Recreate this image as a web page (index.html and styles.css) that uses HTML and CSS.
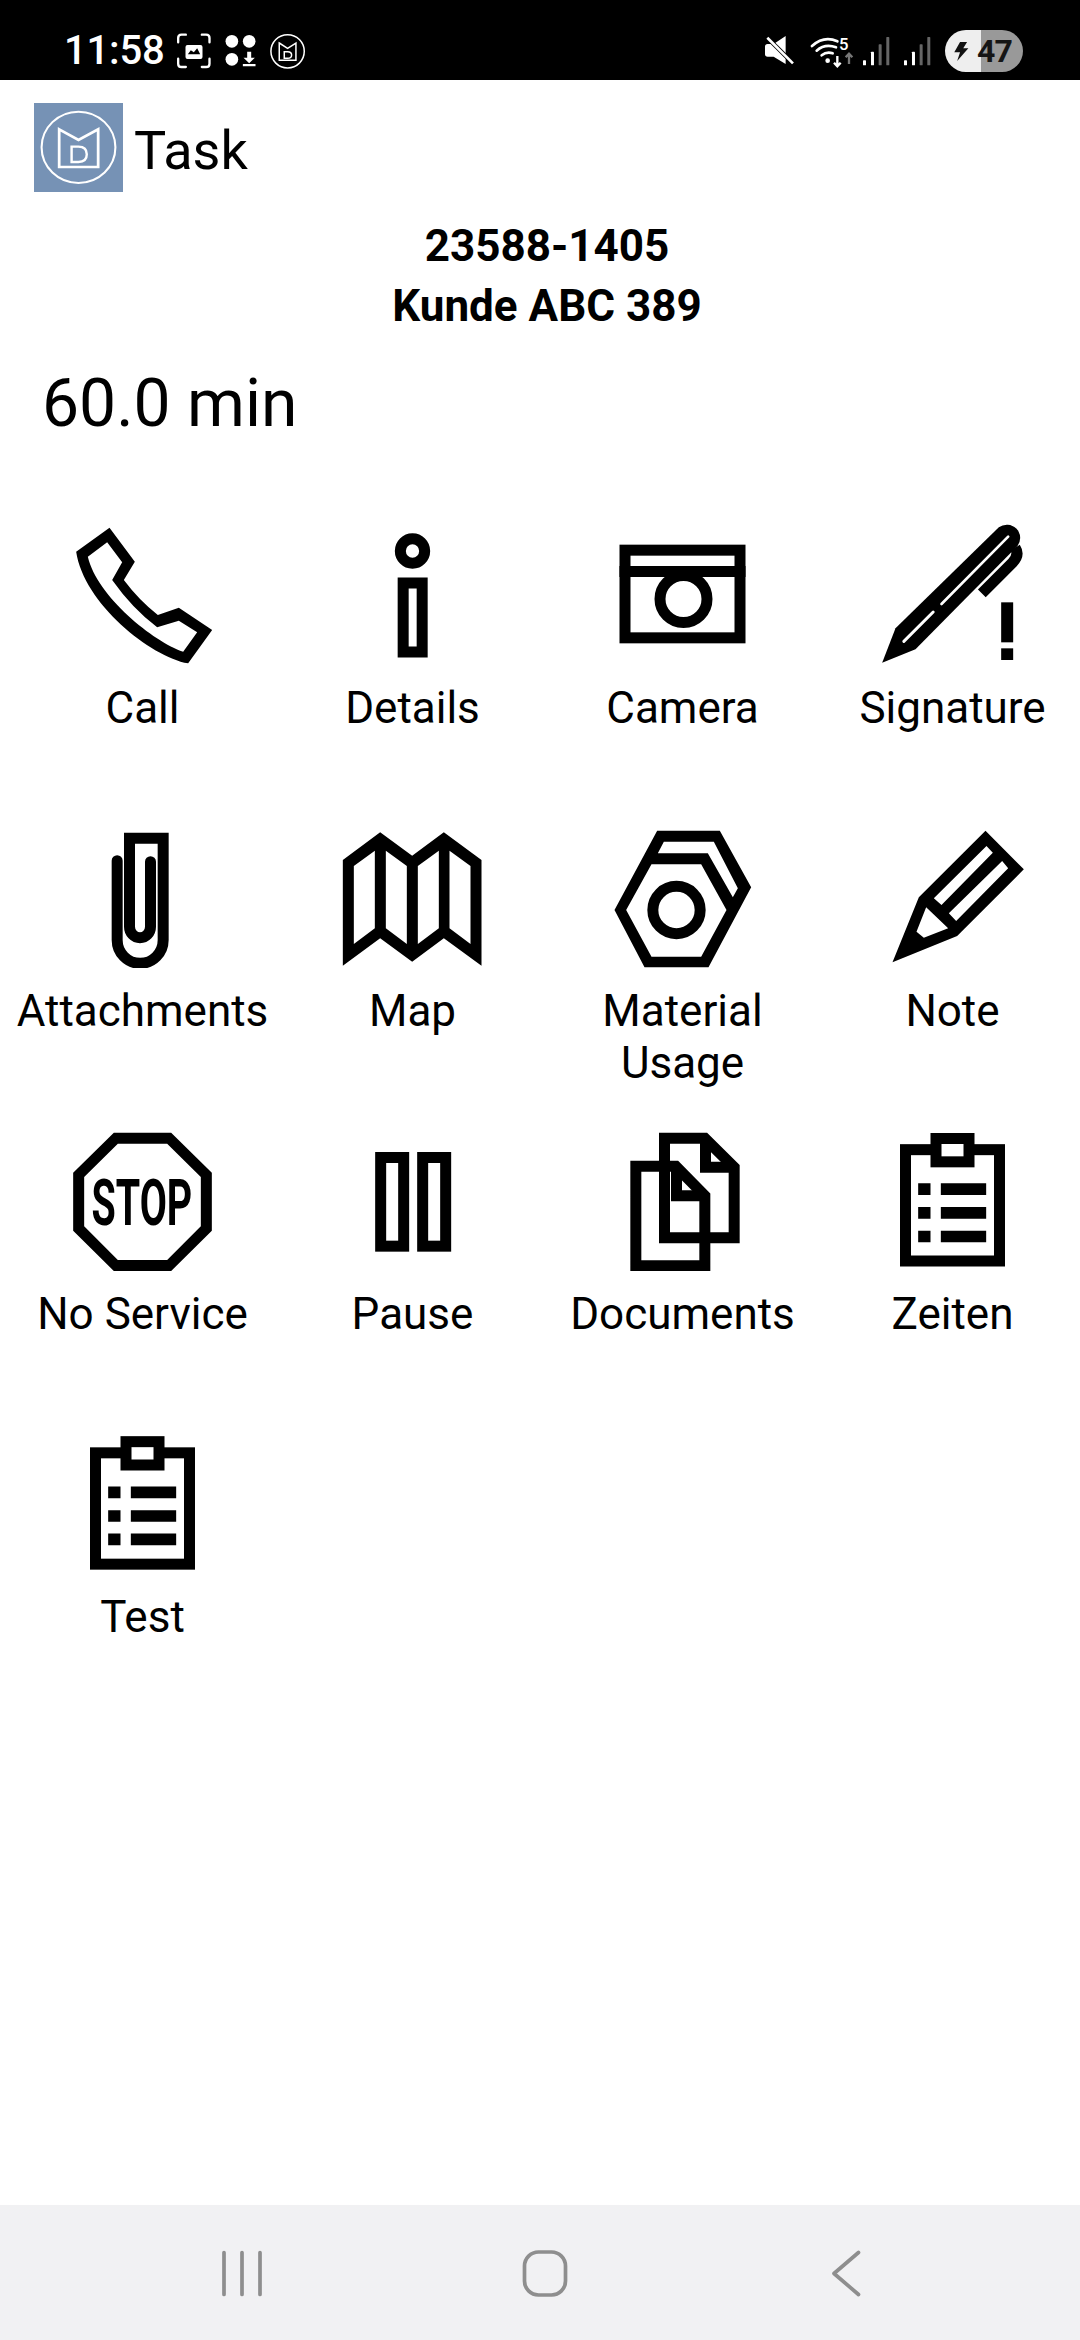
FILE: index.html
```html
<!DOCTYPE html>
<html lang="en">
<head>
<meta charset="utf-8">
<title>Task</title>
<link rel="stylesheet" href="styles.css">
</head>
<body>
<div class="page">
  <header class="status">
    <span class="time">11:58</span>
    <svg class="st-a" viewBox="510 100 105 108"><g fill="none" stroke="#fff" stroke-width="7" stroke-linecap="round" stroke-linejoin="round"><path d="M515 128V115Q515 105 525 105H538M586 105H599Q609 105 609 115V128M609 177V192Q609 202 599 202H586M538 202H525Q515 202 515 192V177"/></g><path fill="#fff" fill-rule="evenodd" d="M543 136H582Q588 136 588 142V172Q588 178 582 178H543Q537 178 537 172V142Q537 136 543 136ZM544 164L553 152L562 158L572 146L581 164Z"/></svg>
    <svg class="st-b" viewBox="650 105 100 100"><g fill="#fff"><circle cx="672" cy="127" r="19"/><circle cx="724" cy="127" r="19"/><circle cx="672" cy="181" r="19"/><path d="M718 158H730V176H741L724 193L707 176H718ZM705 195H743V202H705Z"/></g></svg>
    <svg class="st-c" viewBox="780 98 108 110"><circle cx="834" cy="153" r="50" fill="none" stroke="#fff" stroke-width="4.5"/><g fill="none" stroke="#fff" stroke-width="4.5"><path d="M809 128L834 144L859 128V180H809Z"/><path d="M824 154H834Q846 154 846 164Q846 174 834 174H824Z"/></g></svg>
    <div class="st-right">
      <svg class="ic-mute" viewBox="190 105 100 95"><path fill="#fff" d="M204 132H222L258 108V192L222 170H204Q196 170 196 162V140Q196 132 204 132Z"/><path d="M203 113L280 190" stroke="#000" stroke-width="13"/><path d="M203 113L280 190" stroke="#fff" stroke-width="8"/></svg>
      <svg class="ic-wifi" viewBox="330 100 135 105"><g fill="none" stroke="#fff" stroke-width="8" stroke-linecap="round"><path d="M336 136Q372 104 412 122"/><path d="M350 150Q375 128 408 140"/><path d="M365 164Q380 152 398 158"/></g><circle cx="383" cy="180" r="7" fill="#fff"/><path d="M412 166V196M402 186L412 197L422 186" fill="none" stroke="#fff" stroke-width="7"/><path d="M447 190V160M437 170L447 159L457 170" fill="none" stroke="#777" stroke-width="7"/><text class="wifi-num" x="417" y="149">5</text></svg>
      <svg class="ic-sig" viewBox="487 105 85 90"><rect x="490" y="178" width="9" height="15" rx="2" fill="#fff"/><rect x="514" y="152" width="9" height="41" rx="2" fill="#fff"/><rect x="537" y="130" width="9" height="63" rx="2" fill="#666"/><rect x="560" y="108" width="9" height="85" rx="2" fill="#666"/></svg>
      <svg class="ic-sig2" viewBox="487 105 85 90"><rect x="490" y="178" width="9" height="15" rx="2" fill="#fff"/><rect x="514" y="152" width="9" height="41" rx="2" fill="#fff"/><rect x="537" y="130" width="9" height="63" rx="2" fill="#666"/><rect x="560" y="108" width="9" height="85" rx="2" fill="#666"/></svg>
      <div class="battery">
        <svg class="bolt" viewBox="758 122 50 64"><path fill="#111" d="M780 124H802L790 144H806L771 184L780 156H762Z"/></svg>
        <span class="batt-num">47</span>
      </div>
    </div>
  </header>

  <div class="appbar">
    <svg class="logo" viewBox="99 309 258 267" preserveAspectRatio="none"><rect x="99" y="309" width="258" height="267" fill="#7692b5"/><circle cx="228" cy="442" r="107" fill="none" stroke="#fff" stroke-width="6"/><g fill="none" stroke="#fff" stroke-width="8"><path d="M172 388L228 420L285 388V501H172Z"/><path d="M208 440H228Q252 440 252 463Q252 486 228 486H208Z" stroke-width="7"/></g></svg>
    <h1 class="title">Task</h1>
  </div>

  <div class="head">
    <div>23588-1405</div>
    <div>Kunde ABC 389</div>
  </div>
  <div class="duration">60.0 min</div>

  <main class="grid">
    <div class="cell">
      <svg class="icon" viewBox="82.5 45 450 450"><path fill-rule="evenodd" d="M107 155L207 83L283 185L250 240Q295 300 352 345L415 323L515 390L443 490C330 470 130 310 107 155ZM142 170C170 290 340 425 428 455L470 397L415 362L350 382Q275 325 215 240L245 187L200 127Z"/></svg>
      <span class="label">Call</span>
    </div>
    <div class="cell">
      <svg class="icon" viewBox="892.5 45 450 450"><g class="ln"><circle cx="1116" cy="153" r="36.5"/><rect x="1088" y="249" width="57" height="207"/></g></svg>
      <span class="label">Details</span>
    </div>
    <div class="cell">
      <svg class="icon" viewBox="82.5 45 450 450"><g class="ln"><rect x="133.5" y="150.5" width="345" height="263"/><path d="M117 214.5H495"/><circle cx="309" cy="297" r="70.5"/></g></svg>
      <span class="label">Camera</span>
    </div>
    <div class="cell">
      <svg class="icon" viewBox="892.5 45 450 450"><path d="M905 488L945 385L1255 82A40 40 0 0 1 1311 138L1005 448Z"/><path d="M1283 110L1083 312" stroke="#fff" stroke-width="8" stroke-linecap="round"/><path d="M1058 336L970 424" stroke="#fff" stroke-width="9" stroke-linecap="round"/><path d="M1204 280L1296 188Q1318 165 1304 143" fill="none" stroke="#000" stroke-width="33"/><rect x="1262" y="307" width="36" height="120"/><rect x="1262" y="445" width="36" height="35"/></svg>
      <span class="label">Signature</span>
    </div>

    <div class="cell">
      <svg class="icon" viewBox="82.5 24 450 450"><path class="ln" stroke-linecap="round" d="M230 152V390A69 70 0 0 0 368 390V85H267V350A31.5 33 0 0 0 330 350V155"/></svg>
      <span class="label">Attachments</span>
    </div>
    <div class="cell">
      <svg class="icon" viewBox="892.5 24 450 450"><path fill-rule="evenodd" d="M907 150L1019 67L1115 137L1210 67L1323 150V467L1210 385L1115 455L1019 385L907 467ZM940 168V402L1003 355V122ZM1036 122V355L1099 402V168ZM1132 168V402L1195 355V122ZM1227 122V355L1290 402V168Z"/></svg>
      <span class="label">Map</span>
    </div>
    <div class="cell">
      <svg class="icon" viewBox="82.5 24 450 450"><path fill-rule="evenodd" d="M230 62H418L512 232L384 472H192L102 300ZM250 95L232 130H382L457 262L472 235L400 95ZM213 163L137 300L213 440H362L438 300L362 163Z"/><circle class="ln" cx="288" cy="300" r="71"/></svg>
      <span class="label">Material Usage</span>
    </div>
    <div class="cell">
      <svg class="icon" viewBox="892.5 24 450 450"><path fill-rule="evenodd" d="M1215 62L1330 178L1130 378L936 457L1015 262ZM1218 108L1060 265L1083 285L1237 128ZM1265 153L1105 310L1127 333L1283 175ZM1037 292L1008 365L1030 383L1103 355Z"/></svg>
      <span class="label">Note</span>
    </div>

    <div class="cell">
      <svg class="icon" viewBox="82.5 33 450 450"><path fill-rule="evenodd" d="M220 68H392L514 188V362L392 483H220L98 362V188ZM232 101L131 201V349L232 450H380L481 349V201L380 101Z"/><text class="stop" transform="translate(153 346) scale(0.6 1)">STOP</text></svg>
      <span class="label">No Service</span>
    </div>
    <div class="cell">
      <svg class="icon" viewBox="892.5 33 450 450"><g class="ln"><rect x="1020.5" y="142.5" width="69" height="266"/><rect x="1146.5" y="142.5" width="69" height="266"/></g></svg>
      <span class="label">Pause</span>
    </div>
    <div class="cell">
      <svg class="icon" viewBox="82.5 33 450 450"><g class="ln"><path d="M252 85H373L461 172V383H252Z"/><path d="M375 85V172H461"/><path d="M166 169H286L373 257V467H166Z"/><path d="M288 169V257H373"/></g></svg>
      <span class="label">Documents</span>
    </div>
    <div class="cell">
      <svg class="icon" viewBox="892.5 33 450 450"><g class="ln"><rect x="975" y="119" width="282" height="334"/><rect class="wf" x="1066.5" y="85.5" width="99" height="70"/></g><path d="M1013 220H1050V255H1013ZM1081 220H1217V255H1081ZM1013 291H1050V326H1013ZM1081 291H1217V326H1081ZM1013 362H1050V397H1013ZM1081 362H1217V397H1081Z"/></svg>
      <span class="label">Zeiten</span>
    </div>

    <div class="cell">
      <svg class="icon" viewBox="892.5 32.5 450 450"><g class="ln"><rect x="975" y="119" width="282" height="334"/><rect class="wf" x="1066.5" y="85.5" width="99" height="70"/></g><path d="M1013 220H1050V255H1013ZM1081 220H1217V255H1081ZM1013 291H1050V326H1013ZM1081 291H1217V326H1081ZM1013 361H1050V396H1013ZM1081 361H1217V396H1081Z"/></svg>
      <span class="label">Test</span>
    </div>
  </main>

  <nav class="nav">
    <svg class="nav-ic" viewBox="0 0 60 60"><path d="M12 9.5V51.5M30 9.5V51.5M48 9.5V51.5"/></svg>
    <svg class="nav-ic" viewBox="0 0 60 60"><rect x="9.5" y="9" width="41" height="43" rx="14"/></svg>
    <svg class="nav-ic" viewBox="0 0 60 60"><path d="M41.5 9.5L17 30.5L41.5 51.5"/></svg>
  </nav>
</div>
</body>
</html>
```
FILE: styles.css
```css
* { box-sizing: border-box; }
html, body { margin: 0; padding: 0; background: #fff; }
body { font-family: Roboto, "Liberation Sans", sans-serif; color: #000; }
svg { display: block; flex: none; }

.page { width: 1080px; height: 2340px; display: flex; flex-direction: column; overflow: hidden; }

.status { height: 80px; padding: 22px 57px 0 64px; background: #000; color: #fff; display: flex; align-items: center; flex: none; }
.time { font-size: 40px; font-weight: 500; line-height: 58px; width: 112px; letter-spacing: -0.2px; }
.st-a { width: 36px; height: 36px; }
.st-b { width: 34.4px; height: 33.3px; margin-left: 12px; }
.st-c { width: 37.2px; height: 36.7px; margin-left: 10.4px; }
.st-right { margin-left: auto; display: flex; align-items: center; }
.ic-mute { width: 33.3px; height: 31.7px; }
.ic-wifi { width: 45px; height: 35px; margin-left: 13.4px; }
.ic-sig { width: 28.3px; height: 30px; margin-left: 7.3px; }
.ic-sig2 { width: 28.3px; height: 30px; margin-left: 12.4px; }
.wifi-num { font-size: 50px; font-weight: 500; fill: #fff; }
.battery { width: 78px; height: 42px; margin-left: 13.7px; border-radius: 21px; background: linear-gradient(90deg, #eeeeee 46%, #999999 46%); display: flex; align-items: center; padding-left: 8px; }
.bolt { width: 16px; height: 21px; }
.batt-num { margin-left: 8px; font-size: 32px; font-weight: 700; line-height: 42px; letter-spacing: -0.8px; color: #151515; }

.appbar { display: flex; align-items: flex-start; padding: 23px 0 24px 34px; height: 136px; flex: none; }
.logo { width: 89px; height: 89px; }
.title { margin: 3px 0 0 11px; font-size: 54px; font-weight: 400; line-height: 89px; }

.head { padding-left: 14px; text-align: center; font-size: 44px; font-weight: 700; line-height: 60px; flex: none; }
.duration { margin-top: 33px; padding-left: 42px; font-size: 66px; line-height: 70px; flex: none; }

.grid { margin-top: 76px; padding: 0 0 0 15px; display: grid; grid-template-columns: repeat(4, 255px); column-gap: 15px; grid-auto-rows: 303px; flex: none; }
.cell { display: flex; flex-direction: column; align-items: center; }
.icon { width: 150px; height: 150px; }
.label { margin-top: 17px; font-size: 44px; line-height: 52px; text-align: center; width: 255px; }

.ln { fill: none; stroke: #000; stroke-width: 33; }
.wf { fill: #fff; }
.stop { font-family: Roboto, sans-serif; font-size: 197px; font-weight: 700; fill: #000; }

.nav { margin-top: auto; height: 135px; background: #f1f1f3; display: flex; align-items: center; padding: 0 0 0 212px; gap: 242.5px; flex: none; }
.nav-ic { width: 60px; height: 60px; }
.nav-ic path, .nav-ic rect { fill: none; stroke: #8e8e8e; stroke-width: 3.7; stroke-linecap: round; stroke-linejoin: round; }
```
